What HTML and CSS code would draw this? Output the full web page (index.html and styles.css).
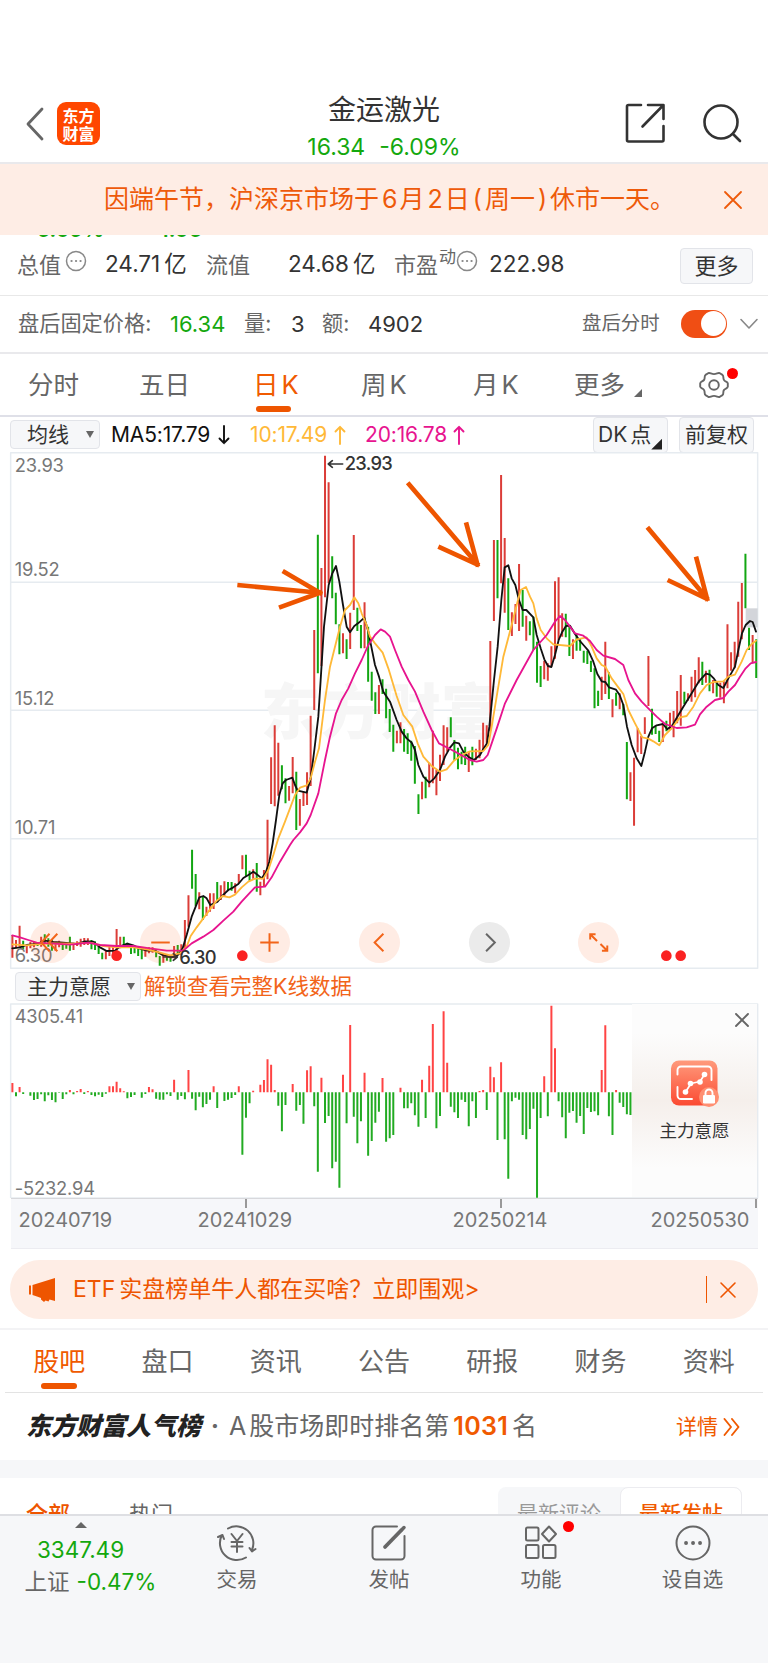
FILE: index.html
```html
<!DOCTYPE html>
<html lang="zh-CN">
<head>
<meta charset="utf-8">
<title>金运激光</title>
<link rel="stylesheet" href="styles.css">
</head>
<body>
<header class="header">
  <div class="header-left">
    <svg class="back" width="20" height="34" viewBox="0 0 20 34"><path d="M17 2 3 17l14 15"/></svg>
    <div class="logo"><span>东方</span><span>财富</span></div>
  </div>
  <div class="header-title">
    <h1>金运激光</h1>
    <p><span>16.34</span><span>-6.09%</span></p>
  </div>
  <div class="header-right">
    <svg width="40" height="42" viewBox="0 0 40 42"><path d="M16 2H3.500A1.500 1.500 0 0 0 2 3.500V37a1.500 1.500 0 0 0 1.500 1.500H37a1.500 1.500 0 0 0 1.500-1.500V23M23 2h15.500v14M37.500 3 17.500 23.500"/></svg>
    <svg width="42" height="42" viewBox="0 0 42 42"><circle cx="19" cy="19" r="16.500"/><path d="m31 31 7 7"/></svg>
  </div>
</header>

<div class="notice">
  <p>因端午节，沪深京市场于<b>6</b>月<b>2</b>日<i>(</i>周一<i>)</i>休市一天。</p>
  <svg width="20" height="20" viewBox="0 0 20 20"><path d="m2 2 16 16M18 2 2 18"/></svg>
</div>

<div class="peek"><span>-6.09%</span><span>-1.06</span></div>

<section class="stats">
  <span class="lab">总值<svg class="info" width="22" height="22" viewBox="0 0 22 22"><circle cx="11" cy="11" r="9.500"/><path d="M6.500 11h.1M11 11h.1M15.500 11h.1" stroke-width="2.200"/></svg></span>
  <span class="val">24.71<em>亿</em></span>
  <span class="lab">流值</span>
  <span class="val">24.68<em>亿</em></span>
  <span class="lab">市盈<sup>动</sup><svg class="info" width="22" height="22" viewBox="0 0 22 22"><circle cx="11" cy="11" r="9.500"/><path d="M6.500 11h.1M11 11h.1M15.500 11h.1" stroke-width="2.200"/></svg></span>
  <span class="val">222.98</span>
  <button class="more">更多</button>
</section>

<section class="after">
  <span class="lab">盘后固定价格:</span><span class="green">16.34</span>
  <span class="lab">量:</span><span>3</span>
  <span class="lab">额:</span><span>4902</span>
  <span class="lab small">盘后分时</span>
  <span class="toggle"><i></i></span>
  <svg width="20" height="12" viewBox="0 0 20 12"><path d="m2 1.500 8 8.500 8-8.500"/></svg>
</section>

<nav class="periods">
  <span>分时</span><span>五日</span><span class="on">日<b>K</b></span><span>周<b>K</b></span><span>月<b>K</b></span>
  <span class="with-corner">更多<i class="corner"></i></span>
  <span class="gear"><svg width="32" height="30" viewBox="0 0 32 30"><path d="M10.200 3.200c1.600-.9 3 .9 5.800.9s4.200-1.800 5.800-.9l2.700 1.700c1.500 1.200.3 3 1.400 5s3.600 1.500 3.900 3.400v3.400c-.3 1.900-2.700 1.600-3.900 3.400s.1 3.800-1.400 5l-2.700 1.700c-1.600.9-3-.9-5.800-.9s-4.200 1.800-5.800.9l-2.700-1.700c-1.500-1.200-.3-3-1.400-5s-3.600-1.500-3.900-3.400v-3.400c.3-1.900 2.700-1.600 3.900-3.400s-.1-3.800 1.400-5z"/><circle cx="16" cy="15" r="4.800"/></svg><i class="dot"></i></span>
</nav>

<div class="tools">
  <button class="pick">均线<i class="caret"></i></button>
  <span class="ma ma5">MA5:17.79<svg width="12" height="20" viewBox="0 0 12 20"><path d="M6 1v17M1.500 13.500 6 18.200l4.500-4.700"/></svg></span>
  <span class="ma ma10">10:17.49<svg width="12" height="20" viewBox="0 0 12 20"><path d="M6 19V2M1.500 6.500 6 1.800l4.500 4.700"/></svg></span>
  <span class="ma ma20">20:16.78<svg width="12" height="20" viewBox="0 0 12 20"><path d="M6 19V2M1.500 6.500 6 1.800l4.500 4.700"/></svg></span>
  <button class="dk">DK<em>点</em><i class="corner"></i></button>
  <button class="fq">前复权</button>
</div>

<section class="kline">
  <svg width="768" height="520" viewBox="0 0 2304 1560">
    <g class="grid"><path d="M32 8H2273V1555H32zM32 397H2273M32 781H2273M32 1166H2273"/></g>
    <text class="mark" x="782" y="852">东方财富</text>
    <rect x="2237" y="475" width="36" height="57" fill="#d3d5da"/>
    <g id="candles"></g>
    <g id="averages"></g>
    <g class="axis">
      <text x="44" y="67">23.93</text><text x="44" y="377">19.52</text><text x="44" y="766">15.12</text><text x="44" y="1151">10.71</text><text x="44" y="1536">6.30</text>
    </g>
    <g class="peak">
      <text x="1034" y="61">23.93</text><text x="538" y="1541">6.30</text>
      <path d="M985 42h43M997 32l-12 10 12 10M490 1521h42M520 1511l12 10-12 10"/>
    </g>
    <g class="arrows"><path d="M712 405 966 429M848 363 966 432M837 473 966 426M1223 98 1434 345M1398 217 1434 350M1315 290 1438 346M1942 232 2123 448M2088 320 2123 453M2003 390 2126 449"/></g>
    <g fill="#fa2222"><circle cx="350" cy="1517" r="16"/><circle cx="727" cy="1517" r="16"/><circle cx="1999" cy="1517" r="16"/><circle cx="2042" cy="1517" r="16"/></g>
  </svg>
  <div class="controls">
    <span><svg viewBox="0 0 42 42"><path d="m20 12-8.500 9 8.500 9M28 12l-8.500 9 8.500 9"/></svg></span>
    <span><svg viewBox="0 0 42 42"><path d="M11.500 21h19"/></svg></span>
    <span><svg viewBox="0 0 42 42"><path d="M11.500 21h19M21 11.500v19"/></svg></span>
    <span><svg viewBox="0 0 42 42"><path d="m25 12-9 9 9 9"/></svg></span>
    <span class="off"><svg viewBox="0 0 42 42"><path d="m17.500 12 9 9-9 9"/></svg></span>
    <span><svg viewBox="0 0 42 42"><path d="M12.500 18v-5.500H18M12.500 12.500l7 7M30 24v5.500h-5.500M30 29.500l-7-7"/></svg></span>
  </div>
</section>

<div class="tools2">
  <button class="pick">主力意愿<i class="caret"></i></button>
  <span>解锁查看完整K线数据</span>
</div>

<section class="willing">
  <svg width="768" height="195" viewBox="0 129 2304 585">
    <g class="grid"><path d="M32 132H2273V714H32z"/></g>
    <g id="bars"></g>
    <g class="axis"><text x="44" y="188">4305.41</text><text x="44" y="705">-5232.94</text></g>
  </svg>
  <div class="lock">
    <svg class="lock-close" width="14" height="14" viewBox="0 0 14 14"><path d="m1 1 12 12M13 1 1 13"/></svg>
    <svg width="50" height="48" viewBox="0 0 50 48">
      <defs><linearGradient id="tile" x1="0" y1="0" x2="0" y2="1"><stop offset="0" stop-color="#ff9a7c"/><stop offset="1" stop-color="#fb4a32"/></linearGradient></defs>
      <rect x="1" y="0.500" width="46.500" height="45" rx="8" fill="url(#tile)"/>
      <path d="M7.500 14.500V10A3.500 3.500 0 0 1 11 6.500H38A3.500 3.500 0 0 1 41.500 10V20M7.500 27v8.500a3.500 3.500 0 0 0 3.500 3.500H22" fill="none" stroke="#fff" stroke-width="1.900"/>
      <path d="m15.500 32 5.500-8.500 9-2 4.500-7" fill="none" stroke="#fff" stroke-width="1.700"/>
      <g fill="#fff"><circle cx="15.500" cy="32" r="2.800"/><circle cx="20.500" cy="23.500" r="2.800"/><circle cx="30" cy="22" r="2.800"/><circle cx="34.500" cy="14.500" r="2.800"/></g>
      <circle cx="39" cy="37" r="10" fill="#ff8f72"/>
      <rect x="33" y="35" width="12" height="8.500" rx="1.300" fill="#fff"/><path d="M35.500 36v-3a3.500 3.500 0 0 1 7 0v3" fill="none" stroke="#fff" stroke-width="1.900"/>
    </svg>
    <span>主力意愿</span>
  </div>
</section>

<div class="dates"><span>20240719</span><span>20241029</span><span>20250214</span><span>20250530</span></div>

<section class="promo">
  <div class="pill">
    <svg width="30" height="26" viewBox="0 0 30 26"><path d="M1 8.500h2v9H1zM4.500 8 27 1v23l-5.500-1.500-1 2-3-1-1.500 1.500-3-2.500v-1.500L9 19.500 4.500 18z"/></svg>
    <p>ETF<em>实盘榜单牛人都在买啥？立即围观</em>&gt;</p>
    <i class="bar"></i>
    <svg class="close" width="18" height="18" viewBox="0 0 18 18"><path d="m2 2 14 14M16 2 2 16"/></svg>
  </div>
</section>

<nav class="sections"><span class="on">股吧</span><span>盘口</span><span>资讯</span><span>公告</span><span>研报</span><span>财务</span><span>资料</span></nav>

<section class="rank">
  <strong>东方财富人气榜</strong><i>·</i>
  <p>A<em>股市场即时排名第</em><b>1031</b>名</p>
  <a>详情<svg width="17" height="18" viewBox="0 0 17 18"><path d="m1.500 1 6.500 8-6.500 8M9 1l6.500 8L9 17"/></svg></a>
</section>

<section class="feed">
  <span class="on">全部</span><span>热门</span>
  <div class="seg"><span>最新评论</span><span class="on">最新发帖</span></div>
</section>

<footer class="bottom">
  <div class="index"><i class="up"></i><b>3347.49</b><p>上证<b>-0.47%</b></p></div>
  <div><svg width="40" height="38" viewBox="0 0 40 38"><path d="M11 4.500A17 17 0 0 1 35 26M29 33.500A17 17 0 0 1 5 11M1 13l4.500-2 1.500 4M38.500 25 35 27.500l-2.500-3.500M14.500 10l5.500 7 5.500-7M20 17v11M14.500 18h11M14.500 22.500h11"/></svg>交易</div>
  <div><svg width="40" height="38" viewBox="0 0 40 38"><path d="M28 2.500H7A3.500 3.500 0 0 0 3.500 6v26A3.500 3.500 0 0 0 7 35.500h25A3.500 3.500 0 0 0 35.500 32V12"/><path d="m16 23 16.500-17" stroke-width="3.800"/><path d="m33.500 5 1.500-1.500" stroke-width="3.500"/></svg>发帖</div>
  <div><svg width="40" height="38" viewBox="0 0 40 38"><rect x="5" y="3.500" width="12.500" height="13" rx="1.500"/><rect x="5" y="21" width="12.500" height="13" rx="1.500"/><rect x="22" y="21" width="12.500" height="13" rx="1.500"/><path d="m28 2.500 7 7.500-7 7.500-7-7.500z"/></svg>功能<i class="dot"></i></div>
  <div><svg width="40" height="38" viewBox="0 0 40 38"><circle cx="20" cy="19" r="16.500"/><path d="M13 19h.1M20 19h.1M27 19h.1" stroke-width="3.800"/></svg>设自选</div>
</footer>
<script src="chart.js"></script>
</body>
</html>
```

FILE: styles.css
```css
* { box-sizing: border-box; }
body { margin: 0; width: 768px; height: 1663px; overflow: hidden; background: #fff; color: #333; font-family: Inter, "Noto Sans CJK SC", sans-serif; font-size: 22px; line-height: 1; }
p, h1 { margin: 0; font-weight: 400; }
button { font: inherit; color: #333; background: #f6f7f9; border: 1px solid #e2e4e9; border-radius: 4px; padding: 0; }
em, i { font-style: normal; }
svg { display: block; fill: none; stroke-linecap: round; stroke-linejoin: round; flex: none; }
.green { color: #14a80e; }
.dot { position: absolute; width: 11px; height: 11px; border-radius: 50%; background: #f00; }

.header { height: 164px; padding: 89px 24px 0; border-bottom: 2px solid #e9e9ec; display: grid; grid-template-columns: 200px 1fr 200px; align-items: start; }
.header-left { display: flex; align-items: center; gap: 12px; padding: 13px 0 0 1px; }
.back { stroke: #666; stroke-width: 2.800; }
.logo { width: 43px; height: 43px; border-radius: 9px; background: #ff4700; color: #fff; font: 700 16px/18px "Noto Sans CJK SC", sans-serif; display: flex; flex-direction: column; align-items: center; justify-content: center; }
.header-title { text-align: center; }
.header-title h1 { font-size: 28px; line-height: 42px; }
.header-title p { display: flex; justify-content: center; gap: 14px; color: #14a80e; font-size: 23px; line-height: 32px; }
.header-right { display: flex; justify-content: flex-end; gap: 37px; padding-top: 14px; stroke: #333; stroke-width: 2.600; }

.notice { height: 71px; background: #feede5; color: #ee5a0a; display: flex; align-items: center; justify-content: space-between; padding: 0 25px 0 104px; font-size: 25px; }
.notice p { white-space: nowrap; }
.notice b { font-weight: 400; margin: 0 2px 0 3px; }
.notice i { margin: 0 3px; position: relative; top: -1px; }
.notice svg { stroke: #ee5a0a; stroke-width: 1.800; }
.peek { height: 2px; overflow: hidden; display: flex; align-items: flex-end; gap: 46px; padding-left: 27px; color: #14a80e; font-size: 21px; font-weight: 600; line-height: 15px; }

.stats { height: 59px; border-bottom: 1px solid #e8e8e8; padding: 0 15px 3px 17px; display: grid; grid-template-columns: 88px 101px 82px 106px 95px 1fr 73px; align-items: center; }
.lab { color: #666; display: flex; align-items: center; }
.stats .info { margin: -8px 0 0 4px; stroke: #888; stroke-width: 1.500; }
.stats sup { font-size: 17px; line-height: 1; margin: -14px -1px 0 1px; }
.stats sup + .info { margin-left: 1px; }
.val em { margin-left: 4px; }
.val { font-size: 22.500px; }
.more { height: 36px; font-size: 22px; position: relative; top: 1px; }

.after { height: 58px; border-bottom: 2px solid #e9e9ec; padding: 0 0 1px 18px; display: grid; grid-template-columns: 152px 74px 47px 31px 46px 214px 99px 58px 1fr; align-items: center; font-size: 21.200px; }
.after > span:not(.lab):not(.toggle) { font-size: 22px; }
.after .small { font-size: 19.400px; }
.after svg { stroke: #888; stroke-width: 1.600; }
.toggle { width: 46px; height: 28px; border-radius: 14px; background: #f04e14; padding: 1.500px; display: flex; justify-content: flex-end; }
.toggle i { width: 25px; height: 25px; border-radius: 50%; background: #fff; }

.periods { height: 63px; border-bottom: 2px solid #dfe0e8; padding-left: 28px; display: grid; grid-template-columns: 111px 115px 107px 112px 101px 125px 1fr; color: #666; font-size: 25.500px; line-height: 61px; }
.periods b { font-weight: 400; margin-left: 3px; }
.periods .on { color: #f05a00; position: relative; }
.periods .on::after { content: ""; position: absolute; left: 3px; top: 52px; width: 35px; height: 6px; border-radius: 3px; background: #ee5500; }
.periods .on { left: -1px; }
.with-corner { display: flex; align-items: flex-end; }
.with-corner .corner { width: 8px; height: 8px; margin: 0 0 18px 9px; background: #666; clip-path: polygon(100% 0, 100% 100%, 0 100%); }
.gear { position: relative; padding-top: 16px; left: -1px; }
.gear svg { stroke: #666; stroke-width: 1.900; }
.gear .dot { left: 29px; top: 14px; }

.tools { height: 35px; padding: 0 14px 0 10px; display: flex; align-items: center; font-size: 21px; }
.pick { display: flex; align-items: center; justify-content: space-between; }
.tools .pick { width: 90px; height: 29px; padding: 0 5px 0 16px; }
.caret { border: 4.500px solid transparent; border-top: 7px solid #666; border-bottom: 0; }
.ma { display: flex; align-items: center; justify-content: space-between; letter-spacing: -.15px; }
.ma svg { stroke: currentColor; stroke-width: 1.900; }
.ma5 { width: 119px; margin-left: 11px; color: #111; }
.ma10 { width: 96px; margin-left: 20px; color: #ffb938; }
.ma20 { width: 100px; margin-left: 19px; color: #e7148f; }
.dk { width: 75px; height: 36px; margin-left: auto; padding-left: 4px; display: flex; align-items: center; }
.dk em { margin-left: 3px; }
.dk .corner { width: 11px; height: 11px; align-self: flex-end; margin: 0 0 2px 0; background: #222; clip-path: polygon(100% 0, 100% 100%, 0 100%); }
.fq { width: 75px; height: 36px; margin-left: 11px; }

.kline { position: relative; height: 518px; margin-top: -2px; }
.grid { stroke: #e6ebf0; stroke-width: 4.500; }
.axis { fill: #777; font-size: 55px; stroke: none; letter-spacing: -.5px; }
.peak { fill: #333; stroke: none; font-size: 55px; font-weight: 500; letter-spacing: -2px; }
.peak path { fill: none; stroke: #333; stroke-width: 5; }
.mark { fill: #f6f6f6; font: 900 180px "Noto Sans CJK SC", sans-serif; }
.arrows { stroke: #ee5500; stroke-width: 14; stroke-linecap: butt; }
.rise { stroke: #db3d38; stroke-width: 6; stroke-linecap: butt; }
.fall { stroke: #12a612; stroke-width: 6; stroke-linecap: butt; }
.avg { stroke-width: 5.500; fill: none; }
.avg5 { stroke: #111; }
.avg10 { stroke: #ffb938; }
.avg20 { stroke: #e7148f; }
.controls { position: absolute; left: 30px; top: 471.500px; display: flex; gap: 68.700px; }
.controls span { width: 41px; height: 41px; border-radius: 50%; background: rgba(255, 100, 30, .12); }
.controls svg { stroke: #f26419; stroke-width: 2; stroke-linecap: butt; stroke-linejoin: miter; }
.controls .off { background: #ebebeb; }
.controls .off svg { stroke: #666; }

.tools2 { height: 36px; padding: 3px 0 0 15px; display: flex; align-items: center; gap: 3px; margin-top: -1px; color: #f26419; font-size: 21.500px; }
.tools2 .pick { width: 126px; height: 29px; padding: 0 5px 0 11px; font-size: 21px; }

.willing { position: relative; height: 195px; }
.willing .rise { stroke: #f44; }
.willing .fall { stroke: #22ab22; }
.lock { position: absolute; left: 632px; top: 1px; width: 125px; height: 193px; background: linear-gradient(#fcfcfc 15%, #f5efeb 50%, #fcfcfc 85%); display: flex; flex-direction: column; align-items: center; padding-top: 56px; gap: 14px; font-size: 17.500px; color: #333; }
.lock-close { position: absolute; right: 8px; top: 9px; stroke: #666; stroke-width: 1.900; }

.dates { height: 51px; margin: 0 10px 0 10.500px; padding: 11px 8px 0 8px; background: #f6f7fa; border-top: 1px solid #d8d8dc; border-bottom: 1px solid #ececf1; display: flex; color: #777; font-size: 20px; line-height: 20px; background-image: linear-gradient(#999, #999), linear-gradient(#999, #999), linear-gradient(#999, #999); background-size: 2px 9px; background-repeat: no-repeat; background-position: 234.500px 0, 489.500px 0, 744.500px 0; }
.dates span { width: 94px; white-space: nowrap; }
.dates span:nth-child(2) { margin-left: 85px; }
.dates span:nth-child(3) { margin-left: 161px; }
.dates span:nth-child(4) { margin-left: 104px; }

.promo { height: 81px; padding: 11px 10px 0; border-bottom: 2px solid #f3f3f5; }
.pill { height: 59px; border-radius: 30px; background: #feede5; display: flex; align-items: center; padding: 0 21px 0 18px; color: #ee5500; font-size: 23px; }
.pill svg { fill: #ee5500; }
.pill p { margin-left: 15px; white-space: nowrap; }
.pill em { margin-left: 4px; }
.bar { width: 1.500px; height: 27px; background: #ee5500; margin: 0 12px 0 auto; }
.pill .close { fill: none; stroke: #ee5500; stroke-width: 1.600; }

.sections { height: 63px; margin: 0 5px; border-bottom: 1px solid #e3e3e3; display: grid; grid-template-columns: repeat(7, 1fr); text-align: center; color: #666; font-size: 26px; line-height: 64px; }
.sections .on { color: #f05a00; position: relative; }
.sections .on::after { content: ""; position: absolute; left: 36px; top: 53px; width: 36px; height: 6px; border-radius: 3px; background: #ee5500; }

.rank { height: 67px; padding: 0 28px 0 26px; display: flex; align-items: center; color: #666; font-size: 25px; }
.rank strong { font-size: 25px; font-weight: 900; font-style: italic; color: #222; }
.rank i { width: 28px; text-align: center; font-weight: 700; }
.rank em { margin: 0 2px 0 3px; }
.rank b { color: #f05a00; font-weight: 600; margin: 0 4px 0 2px; letter-spacing: .3px; }
.rank a { margin-left: auto; color: #f05a00; font-size: 21px; display: flex; align-items: center; gap: 5px; }
.rank svg { stroke: #f05a00; stroke-width: 1.900; }

.feed { height: 54px; border-top: 18px solid #f6f7f9; overflow: hidden; display: flex; align-items: flex-start; padding: 9px 26px 0; color: #666; font-size: 22px; line-height: 54px; }
.feed > .on { color: #ee5500; font-weight: 500; width: 103px; }
.seg { margin-left: auto; width: 244px; height: 56px; background: #f6f7f9; border-radius: 8px; display: flex; color: #999; font-size: 21px; text-align: center; }
.seg span { width: 122px; }
.seg .on { color: #f05a00; background: #fff; border: 1.500px solid #ececf0; border-radius: 8px; font-weight: 500; line-height: 51px; }

.bottom { height: 149px; background: #f6f7f9; border-top: 2px solid #dedfe3; display: grid; grid-template-columns: 161px 152px 152px 152px 151px; text-align: center; color: #666; font-size: 20.500px; line-height: 30px; }
.bottom > div { position: relative; display: flex; flex-direction: column; align-items: center; gap: 3px; padding-top: 8px; }
.bottom svg { stroke: #666; stroke-width: 2; }
.bottom .dot { left: 98px; top: 5px; }
.bottom .index { gap: 0; padding-top: 6px; font-size: 22.500px; }
.index b { font-weight: 400; color: #14a80e; }
.index > b { padding-top: 7px; height: 39px; }
.index p { margin-left: 20px; }
.index p b { margin-left: 7px; }
.up { border: 6px solid transparent; border-bottom: 6px solid #666; border-top: 0; height: 0; }
```

FILE: chart.js
```javascript
// Plot units are thirds of a pixel; sessions are spaced evenly along x.
const NS = 'http://www.w3.org/2000/svg';
const sessionX = i => 37.2 + 10.78 * i;

// Per session: direction, high, low.
const sessions = `
r1455-1523 r1470-1495 r1427-1492 g1472-1497 r1488-1510 r1476-1495 r1474-1492 g1476-1488 r1460-1490 g1453-1480
g1465-1490 g1468-1502 r1478-1502 r1472-1492 g1482-1500 g1480-1496 g1460-1502 r1478-1500 r1474-1488 r1466-1490
r1464-1485 r1465-1485 g1470-1498 g1474-1500 g1485-1512 g1508-1528 r1500-1528 r1490-1518 r1485-1520 r1437-1510
r1460-1495 g1460-1490 g1478-1492 g1488-1512 g1490-1510 g1495-1518 g1498-1528 r1495-1520 r1492-1510 r1492-1508
g1502-1522 g1518-1547 r1512-1538 g1515-1532 g1515-1535 r1488-1525 g1485-1515 r1483-1515 r1410-1495 r1336-1430
g1199-1316 g1272-1368 r1327-1378 g1340-1410 r1370-1398 r1330-1385 r1330-1377 g1296-1355 r1306-1350 r1294-1340
g1296-1322 g1296-1322 r1300-1330 r1272-1300 r1216-1258 g1214-1280 g1262-1292 r1258-1286 g1239-1325 r1295-1336
r1260-1310 r1109-1288 r922-1062 r826-1069 r878-1037 g946-1018 g985-1060 r1008-1052 r921-1030 g965-1140
r1047-1127 r1025-1068 r967-1065 r797-1008 r540-780 g254-670 r354-648 r17-442 r97-400 g319-445
g428-523 g523-613 r550-610 g568-627 r488-597 r255-480 g473-543 g525-595 r457-595 g530-695
g665-752 g727-792 r705-792 g688-732 g716-805 g777-846 g824-905 r842-880 r817-880 g837-905
g850-912 g872-932 g888-1001 g1033-1092 r995-1048 g980-1045 r938-1012 r842-1000 r960-1036 r914-993
r826-945 r832-905 g802-862 g870-930 g893-958 g905-943 g890-945 r905-966 g890-946 r896-930
r869-925 r818-902 r826-880 r573-842 r270-513 g270-445 r75-400 r264-488 g385-540 r487-558
r462-522 r342-543 g420-530 r497-572 g514-556 g500-600 g575-698 g648-711 r632-688 r640-692
r589-650 r394-626 r382-570 r490-560 g491-562 g525-618 r568-627 g552-602 g565-602 g602-638
g602-642 g632-666 g655-775 g722-768 r680-750 r575-732 g667-747 r748-802 g728-767 r730-778
g762-796 g876-1048 r967-1053 r923-1127 r835-907 r858-912 r802-852 r618-768 g776-854 g827-852
g842-876 r820-876 g812-844 r788-840 r783-862 r723-820 r675-827 g725-762 r730-752 r680-755
r660-742 r622-700 g635-705 r662-698 g659-724 r690-730 g695-740 r698-743 r694-760 r523-715
r607-662 r575-655 r455-620 r399-568 g311-475 g533-600 r555-638 g568-684`.trim().split(/\s+/);

const averages = {
  avg5: '37,1495 60,1492 80,1485 110,1482 135,1472 160,1476 190,1478 230,1482 255,1474 280,1475 300,1492 320,1503 345,1502 362,1488 382,1481 400,1486 420,1496 440,1502 465,1502 490,1516 515,1522 535,1514 548,1495 560,1455 575,1400 587,1370 598,1342 610,1338 620,1345 631,1365 652,1356 668,1336 685,1320 700,1312 715,1302 730,1284 745,1275 760,1265 772,1274 785,1285 797,1268 808,1235 818,1180 828,1110 838,1035 848,1000 858,990 877,983 885,1005 893,1022 920,1028 932,985 943,900 955,800 962,690 972,530 986,405 997,370 1008,348 1018,395 1029,465 1040,530 1050,547 1063,528 1080,515 1093,503 1105,545 1115,595 1125,645 1137,680 1150,725 1170,755 1190,810 1205,845 1220,865 1235,878 1245,900 1255,945 1270,980 1288,998 1303,985 1320,960 1335,920 1350,893 1363,877 1377,880 1390,905 1405,920 1422,930 1440,915 1450,897 1461,880 1468,830 1475,760 1482,690 1493,590 1504,450 1514,352 1525,346 1535,385 1546,405 1557,450 1568,480 1579,480 1600,502 1610,555 1622,595 1633,628 1644,648 1654,651 1665,615 1676,570 1687,545 1698,528 1710,527 1725,552 1740,573 1753,588 1765,602 1780,635 1792,672 1805,694 1816,696 1827,712 1848,719 1859,735 1870,765 1881,830 1895,885 1910,925 1924,948 1935,905 1945,860 1956,835 1970,826 1989,822 2002,838 2018,825 2032,800 2050,770 2075,730 2096,695 2118,671 2130,674 2142,686 2155,705 2170,714 2185,685 2205,650 2215,600 2226,550 2237,525 2250,513 2258,516 2268,545',
  avg10: '37,1483 80,1486 110,1483 160,1480 220,1481 270,1478 310,1488 350,1492 400,1492 440,1498 480,1508 510,1516 540,1510 560,1490 572,1458 590,1432 610,1405 630,1378 650,1352 668,1338 688,1342 705,1334 725,1312 745,1295 765,1286 790,1286 805,1260 820,1215 835,1165 855,1115 870,1075 885,1035 900,1013 920,1006 932,985 945,935 957,895 965,830 975,750 990,650 1005,590 1020,530 1035,480 1050,465 1063,442 1075,460 1085,490 1098,520 1110,560 1125,580 1148,608 1165,655 1190,738 1210,795 1237,830 1253,880 1270,920 1295,948 1320,965 1340,958 1362,932 1385,915 1410,904 1450,903 1465,885 1475,830 1490,740 1510,620 1535,525 1550,465 1562,420 1578,411 1590,440 1600,460 1610,505 1622,540 1640,565 1660,583 1710,588 1730,568 1760,562 1775,590 1790,625 1805,645 1816,650 1835,685 1855,712 1870,732 1885,780 1905,820 1927,862 1945,866 1960,874 1978,886 1995,855 2015,835 2040,802 2060,798 2080,770 2100,730 2120,705 2140,696 2170,694 2185,680 2205,674 2225,635 2240,600 2255,582 2268,572',
  avg20: '37,1456 60,1462 85,1470 110,1478 150,1480 210,1484 265,1478 300,1485 350,1488 400,1488 450,1495 500,1502 550,1502 575,1480 610,1460 640,1440 670,1412 700,1385 725,1355 750,1328 765,1312 795,1310 815,1282 840,1235 870,1185 880,1170 900,1147 920,1120 932,1095 955,1030 975,930 990,860 1008,790 1025,750 1045,715 1065,670 1085,630 1105,585 1125,555 1142,538 1155,545 1170,560 1185,600 1205,650 1225,690 1245,725 1270,785 1295,840 1317,880 1350,897 1380,913 1410,930 1430,935 1450,930 1463,915 1475,880 1492,830 1515,760 1550,690 1600,600 1640,555 1665,515 1680,498 1695,510 1710,530 1725,550 1750,557 1770,573 1790,600 1810,617 1845,627 1870,645 1885,690 1905,730 1925,755 1945,775 1970,800 1995,822 2030,834 2060,832 2085,824 2100,793 2120,770 2145,750 2170,744 2185,725 2205,705 2220,680 2237,655 2252,640 2268,636'
};

// Signed bar heights around the zero line.
const flow = [28,-12,16,-5,0,-10,-23,-20,-6,-27,-9,-23,-30,-1,-20,-6,7,-6,4,10,-5,4,-8,-12,-7,-14,-4,18,18,32,12,3,-18,-14,-8,0,-16,-5,16,9,-19,-22,-22,-6,-11,38,-22,-11,-21,67,-19,-54,-13,-45,-35,-22,18,-47,0,-26,-22,-17,-8,18,-187,-76,-33,5,0,23,37,99,83,7,-40,-117,-38,0,25,-55,-38,-94,66,78,-42,-238,44,-92,-71,-228,-208,-286,53,-93,202,-73,-153,-87,59,-190,-146,-91,-58,43,-148,-138,-128,0,14,-48,-48,-33,-69,-103,38,-77,80,205,-108,-71,243,89,-43,-60,-77,-22,-29,-102,-27,-77,4,7,-53,77,45,-143,90,-141,-259,-27,-16,-22,-128,-141,-110,-49,-316,-77,48,-72,260,132,-27,-75,-138,-61,-56,-91,-71,-125,-47,-59,-57,-69,67,201,-72,-128,7,-31,-44,-66,-68];

function addPath(parent, cls, d) {
  const p = document.createElementNS(NS, 'path');
  p.setAttribute('class', cls);
  p.setAttribute('d', d);
  document.getElementById(parent).appendChild(p);
}

for (const [dir, cls] of [['r', 'rise'], ['g', 'fall']]) {
  addPath('candles', cls, sessions.map((s, i) => {
    if (s[0] !== dir) return '';
    const [high, low] = s.slice(1).split('-');
    return `M${sessionX(i)} ${high}V${low}`;
  }).join(''));
  addPath('bars', cls, flow.map((v, i) =>
    v !== 0 && (v > 0) === (dir === 'r') ? `M${sessionX(i)} 397V${397 - v}` : '').join(''));
}
for (const name of ['avg5', 'avg10', 'avg20']) addPath('averages', 'avg ' + name, 'M' + averages[name]);
```
